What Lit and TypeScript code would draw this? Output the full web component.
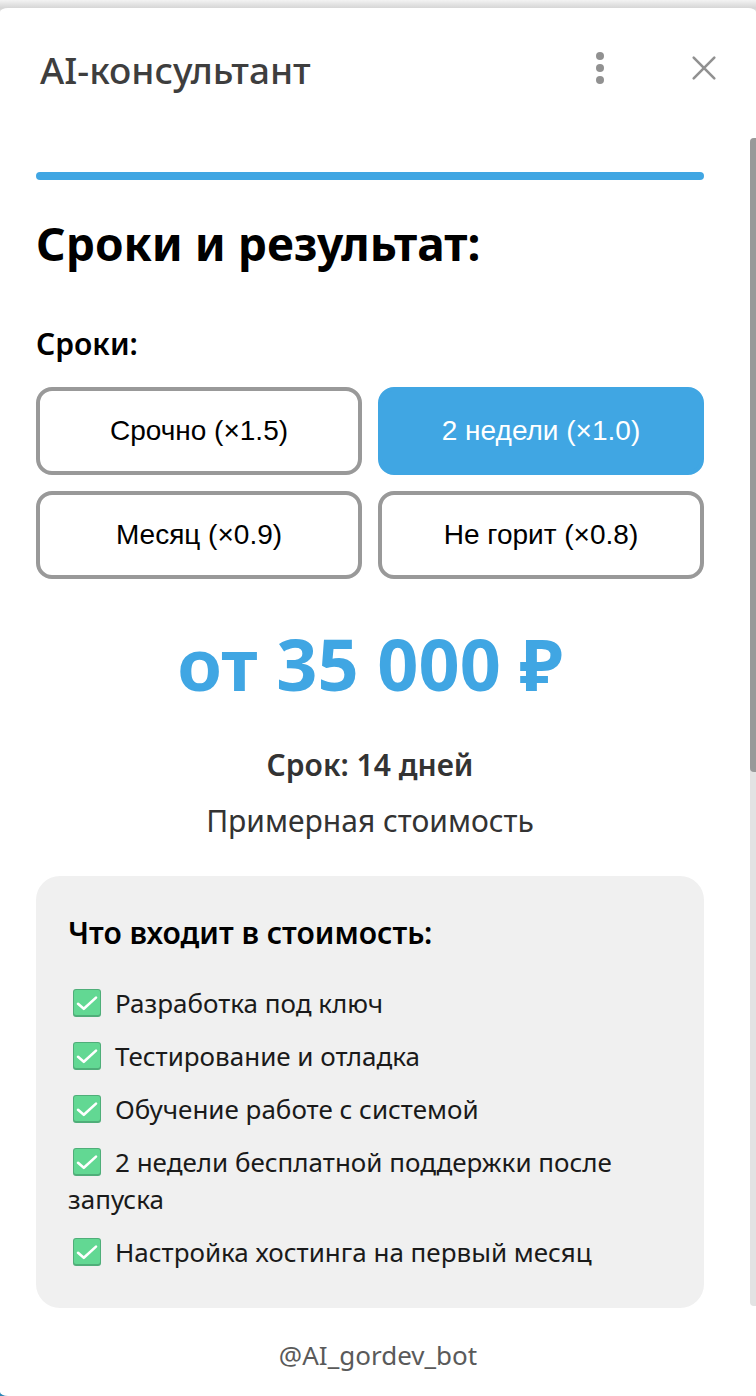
import { LitElement, html, css, svg } from "lit";
import { customElement, state } from "lit/decorators.js";

interface Term {
  label: string;
  factor: string;
}

const TERMS: Term[] = [
  { label: "Срочно", factor: "1.5" },
  { label: "2 недели", factor: "1.0" },
  { label: "Месяц", factor: "0.9" },
  { label: "Не горит", factor: "0.8" },
];

const INCLUDED = [
  "Разработка под ключ",
  "Тестирование и отладка",
  "Обучение работе с системой",
  "2 недели бесплатной поддержки после запуска",
  "Настройка хостинга на первый месяц",
];

const checkIcon = html`<svg class="check" viewBox="0 0 28 28" aria-hidden="true">
  ${svg`
    <rect width="28" height="28" rx="3" fill="#4fae79" />
    <rect x="1" y="1" width="26" height="25" rx="2" fill="#62d893" />
    <path d="M5 14.8l5.8 5L23 8.6" fill="none" stroke="#fff" stroke-width="2.6" stroke-linecap="round" stroke-linejoin="round" />
  `}
</svg>`;

@customElement("app-root")
export class AppRoot extends LitElement {
  static styles = css`
    :host {
      display: block;
      box-sizing: border-box;
      min-height: 100vh;
      padding-top: 8px;
      background: linear-gradient(to bottom, #f3f3f3 0, #d6d6d6 8px, #e4e4e4 12px, #e4e4e4 50%, #2f86b5 50%);
      font-family: "Noto Sans", "Open Sans", sans-serif;
      color: #000;
    }
    *,
    *::before {
      box-sizing: border-box;
    }
    .panel {
      display: flex;
      flex-direction: column;
      min-height: calc(100vh - 8px);
      background: #fff;
      border-radius: 8px 8px 0 8px / 4px 4px 0 4px;
    }
    .header {
      display: flex;
      align-items: center;
      height: 130px;
      padding: 0 32px 10px 40px;
    }
    .title {
      flex: 1;
      margin: 0;
      padding-top: 4px;
      font-size: 37px;
      line-height: 48px;
      font-weight: 500;
      color: #3e3e3e;
    }
    .actions {
      display: flex;
      gap: 64px;
    }
    .icon-button {
      display: block;
      width: 40px;
      height: 40px;
      padding: 0;
      border: 0;
      background: none;
      cursor: pointer;
    }
    .icon-button svg {
      display: block;
      width: 40px;
      height: 40px;
    }
    .viewport {
      display: flex;
      align-items: flex-start;
    }
    .content {
      flex: 1;
      min-width: 0;
      padding: 34px 46px 0 36px;
    }
    .scrollbar {
      width: 6px;
      height: 1168px;
      background: #e3e3e3;
      border-radius: 4px 0 0 4px;
    }
    .thumb {
      height: 634px;
      background: #999;
      border-radius: 4px 0 0 4px;
    }
    .progress {
      height: 8px;
      border-radius: 4px;
      background: #40a6e3;
    }
    .heading {
      margin: 31px 0 0;
      font-size: 46px;
      line-height: 64px;
      font-weight: 700;
    }
    .fieldset {
      margin: 49px 0 0;
      padding: 0;
      border: 0;
      min-width: 0;
    }
    .legend {
      padding: 0;
      font-size: 30px;
      line-height: 40px;
      font-weight: 600;
    }
    .options {
      display: grid;
      grid-template-columns: 1fr 1fr;
      gap: 16px;
      margin-top: 23px;
    }
    .option {
      height: 88px;
      padding: 0 16px;
      border: 4px solid #999;
      border-radius: 16px;
      background: #fff;
      color: #000;
      font: 28px/32px "Liberation Sans", Arial, sans-serif;
      cursor: pointer;
    }
    .option.selected {
      border-color: #40a6e3;
      background: #40a6e3;
      color: #fff;
    }
    .summary {
      text-align: center;
      color: #333;
    }
    .price {
      margin: 36px 0 0;
      font-size: 72px;
      line-height: 96px;
      font-weight: 700;
      color: #40a6e3;
    }
    .term {
      margin: 34px 0 0;
      font-size: 30px;
      line-height: 40px;
      font-weight: 600;
    }
    .note {
      margin: 16px 0 0;
      font-size: 30px;
      line-height: 40px;
    }
    .card {
      margin-top: 35px;
      padding: 37px 32px;
      border-radius: 24px;
      background: #f0f0f0;
    }
    .card-title {
      margin: 0;
      font-size: 30px;
      line-height: 40px;
      font-weight: 600;
    }
    .list {
      display: grid;
      gap: 16px;
      margin: 32px 0 0;
      padding: 0;
      list-style: none;
      font-size: 26px;
      line-height: 37px;
      color: #1a1a1a;
    }
    .check {
      width: 28px;
      height: 28px;
      margin: 0 14px 0 5px;
      vertical-align: -4px;
    }
    .footer {
      padding: 29px 0 22px;
      font-size: 26px;
      line-height: 36px;
      text-align: center;
    }
    .bot {
      color: #5a5a5a;
      text-decoration: none;
    }
  `;

  @state() private selected = 1;

  render() {
    return html`
      <main class="panel">
        <header class="header">
          <h1 class="title">AI-консультант</h1>
          <div class="actions">
            <button class="icon-button" type="button" aria-label="Меню">
              <svg viewBox="0 0 40 40" fill="#919191">
                <circle cx="20" cy="8" r="4" />
                <circle cx="20" cy="20" r="4" />
                <circle cx="20" cy="32" r="4" />
              </svg>
            </button>
            <button class="icon-button" type="button" aria-label="Закрыть">
              <svg viewBox="0 0 40 40" fill="none" stroke="#919191" stroke-width="2.6" stroke-linecap="round">
                <path d="M9.7 9.7l20.6 20.6M30.3 9.7L9.7 30.3" />
              </svg>
            </button>
          </div>
        </header>
        <div class="viewport">
          <div class="content">
            <div class="progress" role="progressbar" aria-valuenow="100" aria-label="Прогресс"></div>
            <h2 class="heading">Сроки и результат:</h2>
            <fieldset class="fieldset">
              <legend class="legend">Сроки:</legend>
              <div class="options">
                ${TERMS.map(
                  (term, i) => html`<button
                    class="option ${i === this.selected ? "selected" : ""}"
                    type="button"
                    aria-pressed=${i === this.selected}
                    @click=${() => (this.selected = i)}
                  >${term.label} (×${term.factor})</button>`
                )}
              </div>
            </fieldset>
            <section class="summary">
              <p class="price">от 35 000 ₽</p>
              <p class="term">Срок: 14 дней</p>
              <p class="note">Примерная стоимость</p>
            </section>
            <section class="card">
              <h3 class="card-title">Что входит в стоимость:</h3>
              <ul class="list">
                ${INCLUDED.map((item) => html`<li>${checkIcon}${item}</li>`)}
              </ul>
            </section>
          </div>
          <div class="scrollbar" aria-hidden="true"><div class="thumb"></div></div>
        </div>
        <footer class="footer"><a class="bot" href="#">@AI_gordev_bot</a></footer>
      </main>
    `;
  }
}
